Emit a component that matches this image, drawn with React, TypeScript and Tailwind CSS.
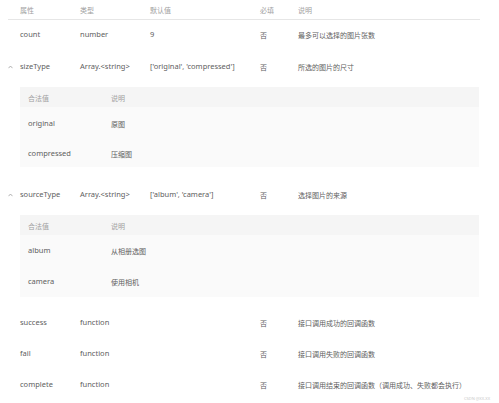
const font = { fontFamily: '"Noto Sans", "Noto Sans CJK SC", sans-serif' }

type Opt = { value: string; desc: string; h: string }
type Param = {
  name: string
  type: string
  def: string
  req: string
  desc: string
  h: string
  options?: Opt[]
}

const params: Param[] = [
  { name: 'count', type: 'number', def: '9', req: '否', desc: '最多可以选择的图片张数', h: 'h-[28px]' },
  {
    name: 'sizeType',
    type: 'Array.<string>',
    def: "['original', 'compressed']",
    req: '否',
    desc: '所选的图片的尺寸',
    h: 'h-[36px]',
    options: [
      { value: 'original', desc: '原图', h: 'h-[32px]' },
      { value: 'compressed', desc: '压缩图', h: 'h-[28px]' },
    ],
  },
  {
    name: 'sourceType',
    type: 'Array.<string>',
    def: "['album', 'camera']",
    req: '否',
    desc: '选择图片的来源',
    h: 'h-[34px]',
    options: [
      { value: 'album', desc: '从相册选图', h: 'h-[30px]' },
      { value: 'camera', desc: '使用相机', h: 'h-[32px]' },
    ],
  },
  { name: 'success', type: 'function', def: '', req: '否', desc: '接口调用成功的回调函数', h: 'h-[30px]' },
  { name: 'fail', type: 'function', def: '', req: '否', desc: '接口调用失败的回调函数', h: 'h-[32px]' },
  { name: 'complete', type: 'function', def: '', req: '否', desc: '接口调用结束的回调函数（调用成功、失败都会执行）', h: 'h-[30px]' },
]

function Chevron() {
  return (
    <svg width="5" height="4" viewBox="0 0 5 4" className="block">
      <path d="M0.5 3.2 L2.5 1 L4.5 3.2" fill="none" stroke="#a0a0a0" strokeWidth="0.8" />
    </svg>
  )
}

function Row({ p }: { p: Param }) {
  return (
    <div className={`flex items-center pt-[2px] ${p.h} text-[#606060]`}>
      <div className="w-[12px] flex items-center">{p.options && <Chevron />}</div>
      <div className="w-[60px]">{p.name}</div>
      <div className="w-[70px]">{p.type}</div>
      <div className="w-[110px]">{p.def}</div>
      <div className="w-[38px] text-[7px]">{p.req}</div>
      <div className="flex-1 text-[7px]">{p.desc}</div>
    </div>
  )
}

function SubTable({ options }: { options: Opt[] }) {
  return (
    <div className="ml-[12px] w-[459px] bg-[#fafafa]">
      <div className="flex items-center pt-[2px] h-[20px] bg-[#f5f5f5] text-[#a0a0a0] text-[7px] pl-[8px]">
        <div className="w-[83px]">合法值</div>
        <div>说明</div>
      </div>
      {options.map((o) => (
        <div key={o.value} className={`flex items-center pt-[2px] pl-[8px] text-[#606060] ${o.h}`}>
          <div className="w-[83px]">{o.value}</div>
          <div className="text-[7px]">{o.desc}</div>
        </div>
      ))}
    </div>
  )
}

export default function App() {
  return (
    <div className="w-[499px] h-[403px] bg-white overflow-hidden relative text-[7.5px] leading-none" style={font}>
      <div className="ml-[8px] w-[472px]">
        <div className="flex items-center pt-[2px] h-[20px] border-b border-[#e6e6e6] text-[#a0a0a0] text-[7px]">
          <div className="w-[12px]" />
          <div className="w-[60px]">属性</div>
          <div className="w-[70px]">类型</div>
          <div className="w-[110px]">默认值</div>
          <div className="w-[38px]">必填</div>
          <div className="flex-1">说明</div>
        </div>

        <Row p={params[0]} />
        <Row p={params[1]} />
        <div className="mt-[3px]">
          <SubTable options={params[1].options!} />
        </div>

        <div className="mt-[10px]">
          <Row p={params[2]} />
        </div>
        <div className="mt-[4px]">
          <SubTable options={params[2].options!} />
        </div>

        <div className="mt-[10px]">
          <Row p={params[3]} />
          <Row p={params[4]} />
          <Row p={params[5]} />
        </div>
      </div>
      <div className="absolute right-[9px] bottom-[2px] text-[4px] text-[#c8c8c8]">CSDN @XX-XX</div>
    </div>
  )
}
